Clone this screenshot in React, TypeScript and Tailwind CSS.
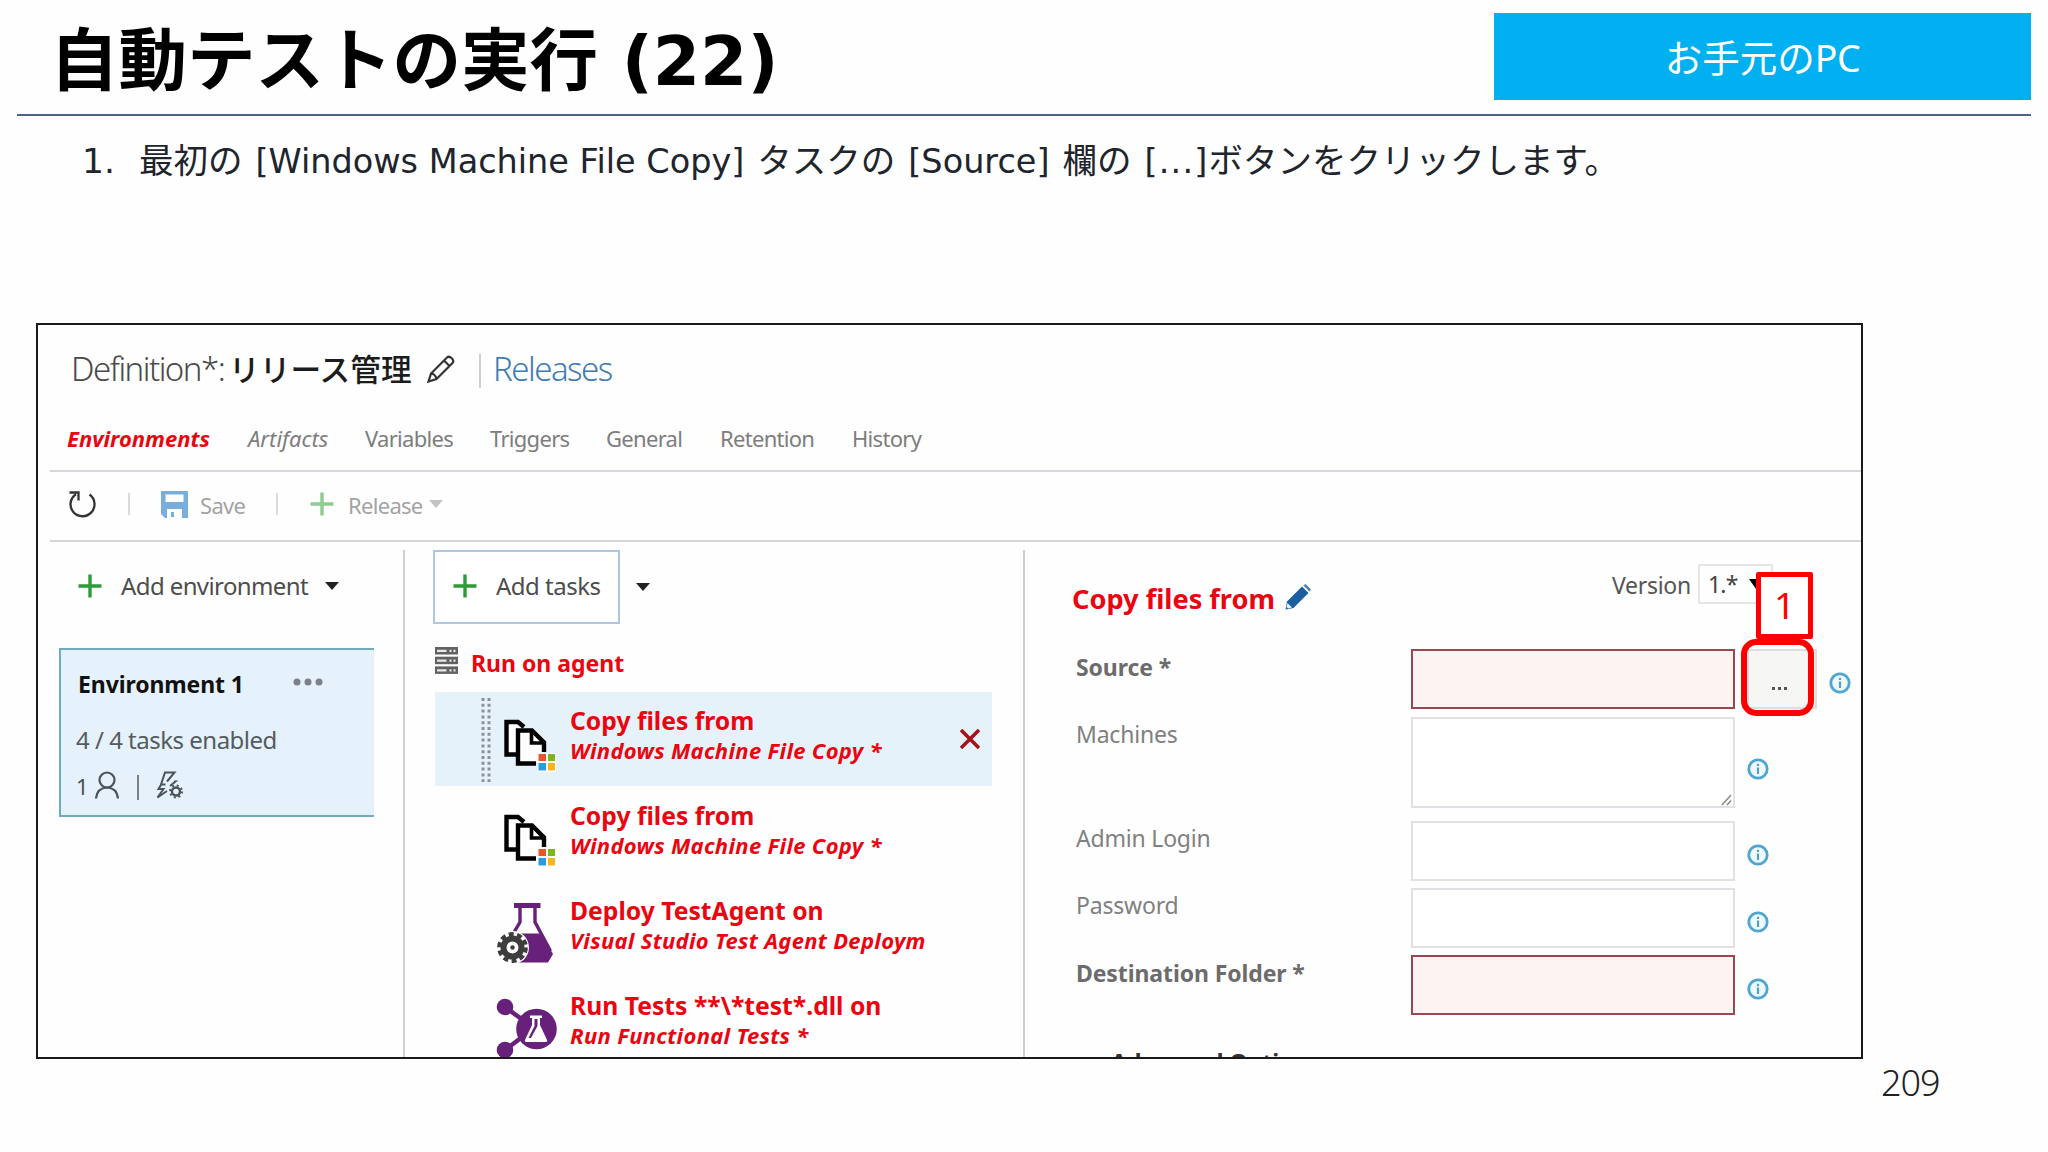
import clsx from "clsx";
import React from "react";

type TaskProps = {
  title: string;
  subtitle: string;
  icon: React.ReactNode;
  selected?: boolean;
};

type FieldProps = {
  label: string;
  required?: boolean;
  multiline?: boolean;
  browse?: boolean;
  className?: string;
};

const tabs = [
  { name: "Variables", className: "w-[125px]" },
  { name: "Triggers", className: "w-[116px]" },
  { name: "General", className: "w-[114px]" },
  { name: "Retention", className: "w-[132px]" },
  { name: "History", className: "w-[100px]" },
];

const Plus = ({ className }: { className?: string }) => (
  <svg viewBox="0 0 24 24" className={clsx("size-6 shrink-0", className)}>
    <path d="M12 0.5V23.5M0.5 12H23.5" stroke="currentColor" strokeWidth="3.4" />
  </svg>
);

const Caret = ({ className }: { className?: string }) => (
  <svg
    viewBox="0 0 14 8"
    preserveAspectRatio="none"
    className={clsx("w-3.5 shrink-0", className)}
  >
    <path d="M0 0H14L7 8Z" fill="currentColor" />
  </svg>
);

const InfoIcon = () => (
  <svg viewBox="0 0 22 22" className="size-[22px] shrink-0">
    <circle cx="11" cy="11" r="9.2" fill="#effaff" stroke="#4fa6d3" strokeWidth="2.8" />
    <path d="M11 9.5V16M11 5.8V8" stroke="#5b9dbd" strokeWidth="2.2" />
  </svg>
);

const CopyIcon = () => (
  <svg viewBox="0 0 64 64" className="size-16">
    <path d="M20 42.500H10.500V10H22L28 15" fill="#fff" stroke="#000" strokeWidth="4.400" />
    <path d="M22 18.500H37L47.500 29V50H22Z" fill="#fff" />
    <path d="M40 51.500H22V18.500H36L48 30.500V40" fill="none" stroke="#000" strokeWidth="4.400" />
    <path d="M35.500 19V31H48" fill="none" stroke="#000" strokeWidth="3.600" />
    <path d="M42 41H60V60H42Z" fill="#fff" />
    <path d="M42.500 42H50V49H42.500Z" fill="#e8562a" />
    <path d="M52 42H59V49H52Z" fill="#7fb51c" />
    <path d="M42.500 51H50V58.500H42.500Z" fill="#2a9be0" />
    <path d="M52 51H59V58.500H52Z" fill="#f7b71c" />
  </svg>
);

const FlaskIcon = () => (
  <svg viewBox="0 0 64 64" className="size-16">
    <path d="M18 1H44.500V6H18Z" fill="#68217a" />
    <path d="M24 5V20L10 44M39 5V20L54.500 49" fill="none" stroke="#68217a" strokeWidth="3.400" />
    <path d="M18 31.500H45L57 52L52 60.500H14Z" fill="#68217a" />
    <circle cx="16.500" cy="45.500" r="16.500" fill="#fff" />
    <circle cx="16.500" cy="45.500" r="13.400" fill="none" stroke="#3d3d3d" strokeWidth="4" strokeDasharray="5 3.420" />
    <circle cx="16.500" cy="45.500" r="9" fill="none" stroke="#3d3d3d" strokeWidth="6" />
    <circle cx="16.500" cy="45.500" r="2.200" fill="#3d3d3d" />
  </svg>
);

const RunTestsIcon = () => (
  <svg viewBox="0 0 64 64" className="size-16">
    <path d="M9 10L38 31L9 53" fill="none" stroke="#68217a" strokeWidth="4.500" />
    <circle cx="9" cy="10" r="8.300" fill="#68217a" />
    <circle cx="9" cy="53" r="8.300" fill="#68217a" />
    <circle cx="40.500" cy="32" r="20.300" fill="#68217a" />
    <path d="M34 18.500H46V21H44V28L51 43Q52 45 49 45H31Q28 45 29 43L36 28V21H34Z" fill="#fff" />
    <path d="M38.500 22H41.500V29L35 41H32.500L38.500 29Z" fill="#68217a" />
  </svg>
);

const ServerIcon = () => (
  <svg viewBox="0 0 23 27" className="mb-px h-[27px] w-[23px] shrink-0">
    {[0, 9.7, 19.4].map((y) => (
      <g key={y} transform={`translate(0 ${y})`}>
        <path d="M0 0H23V7.500H0Z" fill="#626262" />
        <path d="M2 2.800H11.500V5H2ZM14.500 2.800H16.500V5H14.500ZM18.500 2.800H20.500V5H18.500Z" fill="#e8e8e8" />
      </g>
    ))}
  </svg>
);

const Task = ({ title, subtitle, icon, selected }: TaskProps) => (
  <li
    className={clsx(
      "flex w-[557px] items-start",
      selected ? "mb-px h-[94px] bg-[#e6f2fa]" : "h-[95px]"
    )}
  >
    <div className="w-[61px] shrink-0 pt-[6px] pl-[46px]">
      {selected && (
        <svg viewBox="0 0 10 84" className="h-[84px] w-2.5">
          <path
            d="M2 0V84M8 0V84"
            stroke="#8a9299"
            strokeWidth="3"
            strokeDasharray="3 2.800"
          />
        </svg>
      )}
    </div>
    <div className="w-[74px] shrink-0 pt-5">{icon}</div>
    <div className="flex-1 pt-[14px] whitespace-pre text-[#ea0510]">
      <p className="text-[24.7px] leading-[30px] font-bold">{title}</p>
      <p className="text-[22px] leading-[29px] font-bold tracking-[0.3px] italic">{subtitle}</p>
    </div>
    {selected && (
      <svg viewBox="0 0 20 20" className="mt-[37px] mr-3 size-5">
        <path d="M1 1L19 19M19 1L1 19" stroke="#a3151d" strokeWidth="3.600" />
      </svg>
    )}
  </li>
);

const Field = ({ label, required, multiline, browse, className }: FieldProps) => (
  <div className={clsx("flex", className)}>
    <label
      className={clsx(
        "w-[335px] shrink-0 text-[23px]",
        required
          ? "leading-[36px] font-bold tracking-[-0.1px] text-[#6c6c6c]"
          : "leading-[35px] tracking-[-0.2px] text-[#808080]"
      )}
    >
      {label}
    </label>
    <div
      className={clsx(
        "flex w-[324px] shrink-0 items-end justify-end",
        required ? "border-2 border-[#9c4650] bg-[#fdf3f2]" : "border-2 border-[#e2e0e4] bg-white"
      )}
    >
      {multiline && (
        <svg viewBox="0 0 12 12" className="size-3">
          <path d="M1 11L10 1M6 11L10 6.500" stroke="#8a8a8a" strokeWidth="1.500" />
        </svg>
      )}
    </div>
    {browse && (
      <div className="ml-3 flex w-[70px] shrink-0 items-center justify-center gap-[3px] border-2 border-[#dededc] bg-[#f6f6f4] pt-[18px] pr-1.5">
        <span className="size-[3px] bg-[#555]" />
        <span className="size-[3px] bg-[#555]" />
        <span className="size-[3px] bg-[#555]" />
      </div>
    )}
    <div className={clsx("ml-3 flex items-center", multiline ? "pt-[13px]" : "pt-2")}>
      <InfoIcon />
    </div>
  </div>
);

const App = () => {
  return (
    <div className="relative flex h-[1152px] w-[2048px] flex-col overflow-hidden bg-[#fefefe] font-['Noto_Sans','Noto_Sans_CJK_JP',sans-serif]">
      <header className="mx-[17px] flex h-[116px] shrink-0 items-start justify-between border-b-2 border-[#4a6687]">
        <h1 className="mt-[21px] pl-[33px] font-['DejaVu_Sans','Noto_Sans_CJK_JP',sans-serif] text-[68px] leading-[80px] font-bold whitespace-pre text-black">
          <span className="text-[68.5px]">自動テストの実行</span> (22)
        </h1>
        <div className="mt-[13px] flex h-[87px] w-[537px] items-center justify-center bg-[#00b0f0] text-[37.5px] text-white">
          <span className="pt-0.5 leading-none">
            お手元の<span className="tracking-[-0.5px]">PC</span>
          </span>
        </div>
      </header>

      <ol className="flex h-[207px] shrink-0 items-start pt-[25px] pl-[82px] font-['DejaVu_Sans','Noto_Sans_CJK_JP',sans-serif] text-[34.5px] leading-10 text-[#20242c]">
        <li className="flex [word-spacing:2px] whitespace-pre">
          <span className="w-[57px]">1.</span>
          <p>
            最初の{" "}
            <span className="text-[33.5px] [word-spacing:0]">[Windows Machine File Copy]</span>
            {" "}タスクの <span className="text-[33.5px]">[Source]</span> 欄の{" "}
            <span className="text-[33.5px] tracking-[1.2px]">[...]</span>
            ボタンをクリックします。
          </p>
        </li>
      </ol>

      <main className="ml-9 flex h-[736px] w-[1827px] shrink-0 flex-col overflow-hidden border-2 border-[#1a1a1a]">
        <div className="flex h-[86px] shrink-0 items-center pt-0.5 pl-[33px] whitespace-pre">
          <p className="w-[158px] text-[33px] leading-10 font-light tracking-[-1.5px] text-[#4a4a4a]">
            Definition*:
          </p>
          <p className="w-[198px] text-[30.7px] leading-10 font-medium text-[#1c1c1c]">
            リリース管理
          </p>
          <svg viewBox="0 0 28 28" className="size-7">
            <path
              d="M1.500 26.500L4 18.500L20 2.500Q22 0.800 24.500 3Q27.500 5.800 25.500 8L9.500 24ZM17 5.500L22.500 11M4 18.500Q8.500 19 9.500 24"
              fill="none"
              stroke="#333"
              strokeWidth="2.200"
            />
          </svg>
          <span className="mt-1 ml-6 h-[34px] w-0.5 bg-[#cdd0d6]" />
          <a className="ml-3 text-[33px] leading-10 font-light tracking-[-1.500px] text-[#3f7cb5]">
            Releases
          </a>
        </div>

        <nav className="ml-[12px] flex h-[61px] shrink-0 items-center border-b-2 border-[#d8d6db] pb-[5px] pl-[17px] text-[22px] text-[#7d7d7d]">
          <span className="w-[181px] font-bold text-[#ea0510] italic">Environments</span>
          <span className="w-[117px] italic">Artifacts</span>
          {tabs.map((tab) => (
            <span key={tab.name} className={clsx("tracking-[-0.7px]", tab.className)}>
              {tab.name}
            </span>
          ))}
        </nav>

        <div className="ml-[12px] flex h-[70px] shrink-0 items-center border-b-2 border-[#d8d6db] pb-0.5 pl-[18px] text-[22px] tracking-[-0.7px] text-[#a3a3a3]">
          <svg viewBox="0 0 28 28" className="mb-0.5 size-7">
            <path
              d="M21.500 4.500A12 12 0 1 1 8 4.200M1.500 2.500H10.500V10.500"
              fill="none"
              stroke="#333"
              strokeWidth="2.300"
            />
          </svg>
          <span className="mb-0.5 ml-8 h-[22px] w-0.5 bg-[#dadada]" />
          <svg viewBox="0 0 27 27" className="mb-0.5 ml-[31px] size-[27px]">
            <path
              d="M0 0H27V27H21V18H6V27H4L0 23ZM4.500 3.500V11H22.500V3.500Z"
              fill="#79addc"
              fillRule="evenodd"
            />
            <path d="M10 21H13V26H10Z" fill="#79addc" />
          </svg>
          <span className="ml-[12px] w-[76px]">Save</span>
          <span className="mb-0.5 h-[22px] w-0.5 bg-[#dadada]" />
          <Plus className="mb-0.5 ml-8 text-[#8fcb93]" />
          <span className="ml-[14px]">Release</span>
          <Caret className="mb-0.5 ml-1.5 h-2 text-[#c4c4c4]" />
        </div>

        <div className="mt-2 flex min-h-0 flex-1 items-stretch">
          <section className="w-[365px] shrink-0">
            <div className="flex h-[72px] items-center pl-[40px] text-2xl tracking-[-0.6px] text-[#4d4d4d]">
              <Plus className="text-[#2f9a3a]" />
              <span className="ml-[19px]">Add environment</span>
              <Caret className="ml-[17px] h-2 text-[#222]" />
            </div>
            <div className="mt-[26px] ml-[21px] flex h-[169px] w-[315px] flex-col border-y-2 border-l-2 border-[#6fabbf] bg-[#e5f2fb] pt-[14px] pl-[15px]">
              <div className="flex h-10 items-center">
                <b className="w-[217px] pl-0.5 text-[23px] tracking-[-0.1px] text-[#111]">
                  Environment 1
                </b>
                <svg viewBox="0 0 30 8" className="mb-1 h-2 w-[30px]">
                  <g fill="#7b8186">
                    <circle cx="4" cy="4" r="3.500" />
                    <circle cx="15" cy="4" r="3.500" />
                    <circle cx="26" cy="4" r="3.500" />
                  </g>
                </svg>
              </div>
              <p className="mt-4 h-10 text-2xl leading-[39px] tracking-[-0.5px] text-[#555b60]">
                4 / 4 tasks enabled
              </p>
              <div className="mt-2.5 flex h-[30px] items-center text-[22px] text-[#4c5359]">
                <span className="w-[19px] pt-0.5">1</span>
                <svg viewBox="0 0 24 28" className="h-7 w-6">
                  <g fill="none" stroke="currentColor" strokeWidth="2.200">
                    <circle cx="12" cy="9" r="7.500" />
                    <path d="M1 27.500Q2 17 12 16.500Q22 17 23 27.500" />
                  </g>
                </svg>
                <span className="mt-1 ml-[18px] h-[25px] w-0.5 bg-[#7b8186]" />
                <svg viewBox="0 0 27 28" className="ml-[17px] h-7 w-[27px]">
                  <g fill="none" stroke="currentColor" strokeWidth="2">
                    <path d="M18 10.500H19.500L14 15M11 10.500L18.500 1.500H9L5 13.500H9.500M5.500 13L2.500 18H7.500L1.500 26.500L11 20" />
                    <circle cx="20" cy="20.500" r="4" strokeWidth="2.400" />
                    <circle cx="20" cy="20.500" r="6" strokeDasharray="2 2.710" />
                  </g>
                </svg>
              </div>
            </div>
          </section>

          <section className="w-[620px] shrink-0 border-l-2 border-[#d0d0d4] pl-[28px]">
            <div className="flex items-center text-2xl tracking-[-0.5px] text-[#4d4d4d]">
              <button
                type="button"
                className="flex h-[74px] w-[187px] items-center border-2 border-[#afc6e3] bg-white pb-[3px] pl-[18px] tracking-[-0.5px]"
              >
                <Plus className="text-[#2f9a3a]" />
                <span className="ml-[19px]">Add tasks</span>
              </button>
              <Caret className="ml-4 h-2 text-[#222]" />
            </div>
            <div className="mt-[17px] ml-0.5 flex h-10 items-center">
              <ServerIcon />
              <span className="ml-[13px] pt-[5px] text-[23px] font-bold text-[#ea0510]">
                Run on agent
              </span>
            </div>
            <ul className="mt-[11px] ml-0.5">
              <Task
                title="Copy files from"
                subtitle="Windows Machine File Copy *"
                icon={<CopyIcon />}
                selected
              />
              <Task
                title="Copy files from"
                subtitle="Windows Machine File Copy *"
                icon={<CopyIcon />}
              />
              <Task
                title="Deploy TestAgent on"
                subtitle="Visual Studio Test Agent Deploym"
                icon={<FlaskIcon />}
              />
              <Task
                title="Run Tests **\*test*.dll on"
                subtitle="Run Functional Tests *"
                icon={<RunTestsIcon />}
              />
            </ul>
          </section>

          <section className="flex-1 border-l-2 border-[#d0d0d4] pl-[51px]">
            <div className="flex h-[99px] items-start">
              <h2 className="mt-[29px] -ml-1 w-[203px] text-[27.2px] leading-10 font-bold whitespace-nowrap text-[#ea0510]">
                Copy files from
              </h2>
              <svg viewBox="0 0 26 26" className="mt-[34px] ml-[10px] size-[26px]">
                <path d="M0.500 25.500L2 17.500L17 2.500L23.500 9L8.500 24Z" fill="#1b5f9e" />
                <path d="M18.500 1.500L20.500 0L26 5.500L24.500 7.500Z" fill="#4d7ba6" />
                <path d="M2.500 19L7 23.500L3 24.500L1.500 23Z" fill="#e6eef6" />
              </svg>
              <span className="mt-[15px] ml-[301px] w-[78px] text-[23px] leading-10 tracking-[-0.300px] text-[#555]">
                Version
              </span>
              <div className="mt-[14px] ml-2 flex h-10 w-[75px] items-center justify-between border-2 border-[#e6e6e8] pl-2 text-[23px] tracking-[-0.8px] text-[#444]">
                1.*
                <Caret className="mr-2 h-2.5 text-black" />
              </div>
            </div>
            <Field label="Source *" required browse className="h-[60px]" />
            <Field label="Machines" multiline className="mt-[8px] h-[91px]" />
            <Field label="Admin Login" className="mt-[13px] h-[60px]" />
            <Field label="Password" className="mt-[7px] h-[60px]" />
            <Field label="Destination Folder *" required className="mt-[7px] h-[60px]" />
            <p className="mt-[27px] pl-[35px] text-[23px] leading-10 font-bold whitespace-pre text-[#333]">
              Advanced Options
            </p>
          </section>
        </div>
      </main>

      <footer className="pt-1 pl-[1881px] text-4xl leading-10 font-light tracking-[-1px] text-[#222]">
        209
      </footer>

      <div className="absolute top-[572px] left-[1756px] flex h-[67px] w-[57px] items-center justify-center rounded-[2px] border-[5px] border-[#f00] bg-white pb-0.5 text-[37px] text-[#f00]">
        1
      </div>
      <div className="absolute top-[639px] left-[1741px] h-[77px] w-[73px] rounded-[15px] border-[6px] border-[#f00]" />
    </div>
  );
};

export default App;
